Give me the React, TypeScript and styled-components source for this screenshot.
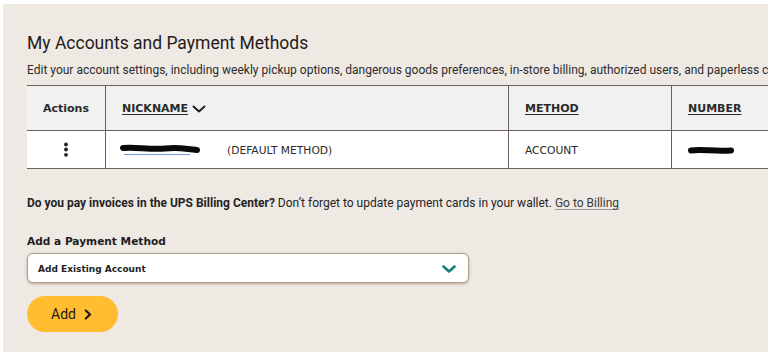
import React, {FC, ReactElement} from 'react';
import styled, {createGlobalStyle} from 'styled-components';

const GlobalStyle = createGlobalStyle`
  html, body {
    margin: 0;
    padding: 0;
    background: #ffffff;
  }
`;

const Frame = styled.div`
  padding: 4px 0 0 3px;
`;

const Panel = styled.section`
  box-sizing: border-box;
  width: 765px;
  height: 348px;
  padding-left: 24px;
  overflow: hidden;
  background: #efe9e4;
  font-family: Roboto, "Liberation Sans", sans-serif;
  color: #242424;
`;

const Title = styled.h1`
  margin: 28px 0 0;
  font-size: 17.5px;
  line-height: 22px;
  font-weight: 400;
  color: #1f1b19;
  white-space: nowrap;
`;

const Intro = styled.p`
  margin: 8px 0 0;
  font-size: 12px;
  line-height: 16px;
  color: #2c2c2c;
  white-space: nowrap;
`;

const Table = styled.div`
  margin-top: 7px;
  width: 785px;
  display: grid;
  grid-template-columns: 79px 403px 163px 140px;
  border-top: 1px solid #6c605a;
  font-family: "DejaVu Sans", Verdana, sans-serif;
`;

interface CellProps {
  head?: boolean;
  center?: boolean;
  last?: boolean;
}

const Cell = styled.div<CellProps>`
  box-sizing: border-box;
  height: ${({head}) => (head ? '45px' : '38px')};
  display: flex;
  align-items: center;
  justify-content: ${({center}) => (center ? 'center' : 'flex-start')};
  padding: ${({center}) => (center ? '0' : '1px 16px 0')};
  background: ${({head}) => (head ? '#f1f1f1' : '#ffffff')};
  border-bottom: 1px solid #6c605a;
  border-right: ${({last}) => (last ? 'none' : '1px solid #6c605a')};
  font-size: ${({head}) => (head ? '11px' : '10.7px')};
  font-weight: ${({head}) => (head ? 700 : 400)};
  color: #2a2a2a;
  white-space: nowrap;
`;

const SortLink = styled.span`
  display: inline-flex;
  align-items: center;
  gap: 4px;
  text-decoration: underline;
  text-underline-offset: 2px;
`;

const Redacted = styled.span`
  display: inline-flex;
  margin-left: -2px;
  margin-right: 27px;
`;

const Note = styled.p`
  margin: 26px 0 0;
  font-size: 12px;
  line-height: 16px;
  color: #242424;
  white-space: nowrap;

  strong {
    font-weight: 700;
  }
`;

const Link = styled.a`
  color: #3a3a3a;
  text-decoration: underline;
  text-decoration-color: #9a9a9a;
  text-underline-offset: 2px;
`;

const Label = styled.div`
  margin-top: 23px;
  font-family: "DejaVu Sans", Verdana, sans-serif;
  font-size: 10.6px;
  line-height: 14px;
  font-weight: 700;
  color: #1e1e1e;
`;

const Select = styled.div`
  box-sizing: border-box;
  margin-top: 5px;
  width: 442px;
  height: 30px;
  display: flex;
  align-items: center;
  justify-content: space-between;
  padding: 1px 12px 0 10px;
  background: #ffffff;
  border: 1px solid #b39e8c;
  border-radius: 6px;
  box-shadow: 0 1px 3px rgba(110, 80, 50, 0.45);
  font-family: "DejaVu Sans", Verdana, sans-serif;
  font-size: 9px;
  font-weight: 700;
  color: #1e1e1e;
`;

const AddButton = styled.button`
  margin-top: 13px;
  width: 91px;
  height: 36px;
  display: flex;
  align-items: center;
  justify-content: center;
  gap: 8px;
  padding: 0 2px 0 0;
  border: none;
  border-radius: 18px;
  background: #ffbd2f;
  font-family: Roboto, "Liberation Sans", sans-serif;
  font-size: 14px;
  color: #1e1a16;
  cursor: pointer;
`;

const Kebab = (): ReactElement => (
  <svg width="6" height="16" viewBox="0 0 6 16">
    <circle cx="3" cy="2.5" r="1.9" fill="#222"/>
    <circle cx="3" cy="7.5" r="1.9" fill="#222"/>
    <circle cx="3" cy="12.8" r="1.9" fill="#222"/>
  </svg>
);

const Chevron: FC<{w: number; h: number; color: string; stroke: number}> = ({w, h, color, stroke}) => (
  <svg width={w} height={h} viewBox={`0 0 ${w} ${h}`}>
    <polyline points={`1.5,1.5 ${w / 2},${h - 1.5} ${w - 1.5},1.5`} fill="none" stroke={color}
              strokeWidth={stroke} strokeLinecap="round" strokeLinejoin="round"/>
  </svg>
);

const NicknameScribble = (): ReactElement => (
  <svg width="80" height="12" viewBox="0 0 80 12">
    <path d="M4 10.5 H70" stroke="#3d6fc2" strokeWidth="1" opacity="0.7"/>
    <path d="M3 4 C15 2.5, 30 6, 45 4.5 S65 5, 77 6" fill="none" stroke="#0a0a0a" strokeWidth="6"
          strokeLinecap="round"/>
  </svg>
);

const NumberScribble = (): ReactElement => (
  <svg width="46" height="9" viewBox="0 0 46 9">
    <path d="M3 4.5 C12 3, 25 5.5, 43 4.5" fill="none" stroke="#0a0a0a" strokeWidth="6" strokeLinecap="round"/>
  </svg>
);

export default function App(): ReactElement {
  return (
    <>
      <GlobalStyle/>
      <Frame>
        <Panel>
          <Title>My Accounts and Payment Methods</Title>
          <Intro>
            Edit your account settings, including weekly pickup options, dangerous goods preferences, in-store
            billing, authorized users, and paperless communications.
          </Intro>

          <Table>
            <Cell head center>Actions</Cell>
            <Cell head>
              <SortLink>NICKNAME <Chevron w={14} h={8} color="#222" stroke={2}/></SortLink>
            </Cell>
            <Cell head><SortLink>METHOD</SortLink></Cell>
            <Cell head last><SortLink>NUMBER</SortLink></Cell>

            <Cell center><Kebab/></Cell>
            <Cell>
              <Redacted><NicknameScribble/></Redacted>
              (DEFAULT METHOD)
            </Cell>
            <Cell>ACCOUNT</Cell>
            <Cell last><NumberScribble/></Cell>
          </Table>

          <Note>
            <strong>Do you pay invoices in the UPS Billing Center?</strong> Don’t forget to update payment cards in
            your wallet. <Link>Go to Billing</Link>
          </Note>

          <Label>Add a Payment Method</Label>
          <Select>
            Add Existing Account
            <Chevron w={14} h={8} color="#16807a" stroke={2.6}/>
          </Select>

          <AddButton>
            Add
            <svg width="8" height="11" viewBox="0 0 8 11">
              <polyline points="1.8,1.5 6,5.5 1.8,9.5" fill="none" stroke="#1e1a16" strokeWidth="2.2"
                        strokeLinecap="round" strokeLinejoin="round"/>
            </svg>
          </AddButton>
        </Panel>
      </Frame>
    </>
  );
}
